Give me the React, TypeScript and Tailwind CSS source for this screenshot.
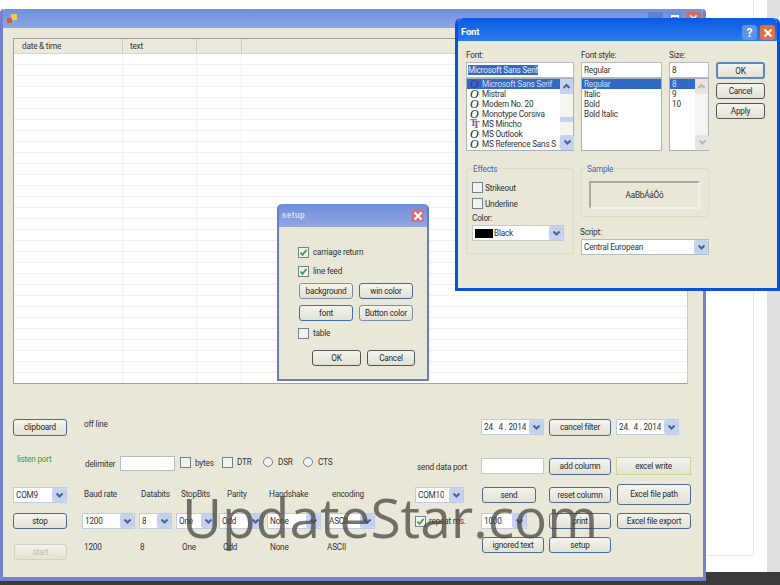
import type { ReactNode } from 'react';

function Btn({
  children,
  className = '',
  tone = 'border-[#4f6a8a]',
}: {
  children: ReactNode;
  className?: string;
  tone?: string;
}) {
  return (
    <div
      className={`flex shrink-0 items-center justify-center rounded-[3px] border bg-gradient-to-b from-[#f4f4ee] to-[#e3e1d3] text-[#2a2a2a] ${tone} ${className}`}
    >
      {children}
    </div>
  );
}

function Arrow({ muted = false }: { muted?: boolean }) {
  return (
    <span
      className={`flex h-full w-[14px] shrink-0 items-center justify-center rounded-[2px] ${
        muted ? 'bg-[#e6e6e0]' : 'bg-[#c4d2f2]'
      }`}
    >
      <svg width="9" height="7" viewBox="0 0 9 7" fill="none">
        <path d="M1.5 1.5 L4.5 4.5 L7.5 1.5" stroke={muted ? '#b8b8b0' : '#4d6185'} strokeWidth="2" />
      </svg>
    </span>
  );
}

function Combo({ value, className = '' }: { value: string; className?: string }) {
  return (
    <div
      className={`flex shrink-0 items-center justify-between border border-[#c2cbdd] bg-white pl-[2px] ${className}`}
    >
      <span className="truncate whitespace-pre">{value}</span>
      <Arrow />
    </div>
  );
}

function Check({ checked = false, className = '' }: { checked?: boolean; className?: string }) {
  return (
    <span
      className={`flex h-[11px] w-[11px] shrink-0 items-center justify-center border border-[#74808c] bg-[#f2f2ec] ${className}`}
    >
      {checked && (
        <svg width="9" height="9" viewBox="0 0 9 9" fill="none">
          <path d="M1.5 4.5 L3.5 6.8 L7.5 2" stroke="#3f9a3f" strokeWidth="1.8" />
        </svg>
      )}
    </span>
  );
}

function Radio({ className = '' }: { className?: string }) {
  return <span className={`block h-[10px] w-[10px] shrink-0 rounded-full border border-[#71808f] bg-[#f2f2ec] ${className}`} />;
}

const tableRows = Array.from({ length: 30 }, (_, i) => i);

function TableArea() {
  return (
    <div className="ml-[10px] mt-[10px] h-[346px] w-[675px] shrink-0 overflow-hidden border border-[#9a9d9c] border-b-[#a3a3a0] border-r-[#c9c9c0] bg-white">
      <div className="flex h-[15px] border-b border-[#d8d6c6] bg-[#ebe9d9] text-[#333]">
        <div className="w-[109px] border-r border-[#cfcdbd] pl-[8px] leading-[14px]">date &amp; time</div>
        <div className="w-[74px] border-r border-[#cfcdbd] pl-[7px] leading-[14px]">text</div>
        <div className="w-[45px] border-r border-[#cfcdbd]" />
      </div>
      {tableRows.map((r) => (
        <div key={r} className="flex h-[11px] border-b border-[#f1f1eb]">
          <div className="w-[109px] border-r border-[#f3f3ee]" />
          <div className="w-[74px] border-r border-[#f3f3ee]" />
          <div className="w-[45px] border-r border-[#f3f3ee]" />
        </div>
      ))}
    </div>
  );
}

function ControlPanel() {
  return (
    <div className="ml-[10px] mt-[35px] flex w-[680px] flex-col leading-[11px] text-[#333]">
      {/* clipboard row */}
      <div className="flex h-[20px] items-start">
        <Btn className="h-[17px] w-[54px]">clipboard</Btn>
        <span className="ml-[17px] mt-[0px]">off line</span>
        <div className="ml-auto mr-[14px] flex items-start">
          <Combo value="24.  4 . 2014" className="h-[16px] w-[63px]" />
          <Btn className="ml-[5px] h-[17px] w-[62px]">cancel filter</Btn>
          <Combo value="24.  4 . 2014" className="ml-[5px] h-[16px] w-[63px]" />
        </div>
      </div>

      {/* listen port / delimiter row */}
      <div className="mt-[15px] flex h-[22px] items-start whitespace-nowrap">
        <span className="ml-[4px] w-[68px] text-[#3f9a3f]">listen port</span>
        <span className="mt-[5px] w-[35px]">delimiter</span>
        <div className="mt-[2px] h-[15px] w-[55px] border border-[#b5bac0] bg-white" />
        <Check className="ml-[5px] mt-[3px]" />
        <span className="ml-[4px] mt-[4px] w-[20px]">bytes</span>
        <Check className="ml-[7px] mt-[3px] border-[#445]" />
        <span className="ml-[4px] mt-[3px] w-[16px]">DTR</span>
        <Radio className="ml-[10px] mt-[3px]" />
        <span className="ml-[5px] mt-[3px] w-[16px]">DSR</span>
        <Radio className="ml-[9px] mt-[3px]" />
        <span className="ml-[5px] mt-[3px] w-[17px]">CTS</span>
        <span className="ml-[82px] mt-[8px] w-[64px]">send data port</span>
        <div className="mt-[4px] h-[16px] w-[63px] border border-[#c6c8cc] bg-white" />
        <Btn className="ml-[5px] mt-[4px] h-[17px] w-[62px]">add column</Btn>
        <Btn className="ml-[5px] mt-[3px] h-[18px] w-[75px] rounded-none" tone="border-[#cfd48f]">
          excel write
        </Btn>
      </div>

      {/* port row */}
      <div className="mt-[8px] flex h-[21px] items-start whitespace-nowrap">
        <Combo value="COM9" className="mt-[3px] h-[16px] w-[54px]" />
        <span className="ml-[17px] mt-[5px] w-[57px]">Baud rate</span>
        <span className="mt-[5px] w-[40px]">Databits</span>
        <span className="mt-[5px] w-[46px]">StopBits</span>
        <span className="mt-[5px] w-[42px]">Parity</span>
        <span className="mt-[5px] w-[63px]">Handshake</span>
        <span className="mt-[5px] w-[50px]">encoding</span>
        <Combo value="COM10" className="ml-[33px] mt-[3px] h-[16px] w-[49px]" />
        <Btn className="ml-[18px] mt-[3px] h-[16px] w-[54px]">send</Btn>
        <Btn className="ml-[13px] mt-[3px] h-[16px] w-[62px]">reset column</Btn>
        <Btn className="ml-[6px] h-[21px] w-[74px]">Excel file path</Btn>
      </div>

      {/* settings row */}
      <div className="mt-[8px] flex h-[16px] items-start whitespace-nowrap">
        <Btn className="h-[16px] w-[54px]">stop</Btn>
        <Combo value="1200" className="ml-[15px] h-[16px] w-[53px]" />
        <Combo value="8" className="ml-[4px] h-[16px] w-[33px]" />
        <Combo value="One" className="ml-[4px] h-[16px] w-[40px]" />
        <Combo value="Odd" className="ml-[3px] h-[16px] w-[44px]" />
        <Combo value="None" className="ml-[4px] h-[16px] w-[54px]" />
        <Combo value="ASCII" className="ml-[5px] h-[16px] w-[49px]" />
        <Check checked className="ml-[40px] mt-[3px]" />
        <span className="ml-[3px] mt-[3px] w-[52px]">repeat ms.</span>
        <Combo value="1000" className="h-[16px] w-[46px]" />
        <Btn className="ml-[22px] h-[16px] w-[62px]">print</Btn>
        <Btn className="ml-[6px] h-[16px] w-[74px]">Excel file export</Btn>
      </div>

      {/* start row */}
      <div className="mt-[8px] flex h-[23px] items-start whitespace-nowrap">
        <Btn className="ml-[1px] mt-[7px] h-[16px] w-[53px] text-[#bdbdb0]" tone="border-[#d2d0c2]">
          start
        </Btn>
        <span className="ml-[17px] mt-[5px] w-[56px]">1200</span>
        <span className="mt-[5px] w-[42px]">8</span>
        <span className="mt-[5px] w-[41px]">One</span>
        <span className="mt-[5px] w-[47px]">Odd</span>
        <span className="mt-[5px] w-[57px]">None</span>
        <span className="mt-[5px] w-[155px]">ASCII</span>
        <Btn className="h-[16px] w-[62px]">ignored text</Btn>
        <Btn className="ml-[5px] h-[16px] w-[62px]" tone="border-[#3f6fae]">
          setup
        </Btn>
      </div>
    </div>
  );
}

function MainWindow() {
  return (
    <div className="absolute left-0 top-[9px] flex h-[572px] w-[706px] flex-col rounded-t-[4px] border-x-[3px] border-b-[4px] border-[#7480cc] bg-[#e9e8d8]">
      <div className="flex h-[19px] shrink-0 items-center rounded-t-[3px] bg-gradient-to-b from-[#6e8fdc] to-[#8ea6e4] pl-[4px]">
        <svg width="10" height="10" viewBox="0 0 10 10">
          <rect x="4" y="0" width="6" height="6" fill="#f2cb4e" />
          <rect x="0" y="4" width="5" height="5" fill="#d2553f" />
          <rect x="5" y="6" width="3" height="3" fill="#8fa8d8" />
        </svg>
        <div className="ml-auto mr-[2px] flex gap-[4px]">
          <span className="h-[14px] w-[15px] rounded-[2px] bg-[#5d7fd8]" />
          <span className="flex h-[14px] w-[15px] items-start justify-center rounded-[2px] bg-[#6d8de0]">
            <span className="mt-[3px] h-[7px] w-[8px] border border-t-2 border-white" />
          </span>
          <span className="flex h-[14px] w-[15px] items-center justify-center rounded-[2px] bg-[#cd6b66]">
            <svg width="9" height="9" viewBox="0 0 10 10" fill="none">
              <path d="M1.5 1.5 L8.5 8.5 M8.5 1.5 L1.5 8.5" stroke="#f3dede" strokeWidth="2" />
            </svg>
          </span>
        </div>
      </div>
      <TableArea />
      <ControlPanel />
    </div>
  );
}

function SetupDialog() {
  return (
    <div className="absolute left-[277px] top-[204px] flex h-[177px] w-[152px] flex-col rounded-t-[5px] border-x-[2px] border-b-[2px] border-[#6a7cc6] bg-[#e9e8d8] leading-[11px] text-[#333]">
      <div className="flex h-[23px] shrink-0 items-center justify-between rounded-t-[4px] bg-gradient-to-b from-[#6f8cd8] to-[#92a7e2] pl-[3px] pr-[3px]">
        <span className="font-bold tracking-[0.5px] text-[#d7def3]">setup</span>
        <span className="flex h-[13px] w-[13px] items-center justify-center rounded-[2px] bg-[#d5717c]">
          <svg width="10" height="10" viewBox="0 0 10 10" fill="none">
            <path d="M1.5 1.5 L8.5 8.5 M8.5 1.5 L1.5 8.5" stroke="#fff" strokeWidth="2" />
          </svg>
        </span>
      </div>
      <div className="flex flex-col pl-[19px]">
        <div className="mt-[20px] flex h-[11px] items-center gap-[4px]">
          <Check checked /> carriage return
        </div>
        <div className="mt-[8px] flex h-[11px] items-center gap-[4px]">
          <Check checked /> line feed
        </div>
        <div className="ml-[1px] mt-[6px] flex gap-[6px]">
          <Btn className="h-[16px] w-[54px]" tone="border-[#7d8ea3]">background</Btn>
          <Btn className="h-[16px] w-[54px]">win color</Btn>
        </div>
        <div className="ml-[1px] mt-[6px] flex gap-[6px]">
          <Btn className="h-[16px] w-[54px]" tone="border-[#3f6fae]">font</Btn>
          <Btn className="h-[16px] w-[54px]" tone="border-[#7d8ea3]">Button color</Btn>
        </div>
        <div className="mt-[7px] flex h-[11px] items-center gap-[4px]">
          <Check /> table
        </div>
        <div className="ml-[14px] mt-[11px] flex gap-[6px]">
          <Btn className="h-[16px] w-[49px]" tone="border-[#555]">OK</Btn>
          <Btn className="h-[16px] w-[48px]" tone="border-[#555]">Cancel</Btn>
        </div>
      </div>
    </div>
  );
}

const fonts: { name: string; kind?: 'tt'; selected?: boolean }[] = [
  { name: 'Microsoft Sans Serif', selected: true },
  { name: 'Mistral' },
  { name: 'Modern No. 20' },
  { name: 'Monotype Corsiva' },
  { name: 'MS Mincho', kind: 'tt' },
  { name: 'MS Outlook' },
  { name: 'MS Reference Sans S' },
];

function ScrollBar({ muted = false, thumb = false }: { muted?: boolean; thumb?: boolean }) {
  return (
    <div className="flex h-full w-[13px] shrink-0 flex-col bg-[#f5f5ef]">
      <span className={`flex h-[15px] shrink-0 items-center justify-center ${muted ? 'bg-[#e6e6e0]' : 'bg-[#c4d2f2]'}`}>
        <svg width="9" height="7" viewBox="0 0 9 7" fill="none">
          <path d="M1.5 5 L4.5 2 L7.5 5" stroke={muted ? '#b8b8b0' : '#4d6185'} strokeWidth="2" />
        </svg>
      </span>
      {thumb && <span className="mt-[23px] h-[5px] shrink-0 bg-[#c4d2f2]" />}
      <span className="mt-auto h-[15px] shrink-0">
        <Arrow muted={muted} />
      </span>
    </div>
  );
}

function Glyph({ kind, selected }: { kind?: 'tt'; selected?: boolean }) {
  if (kind === 'tt') {
    return (
      <span className="relative h-[10px] w-[12px] shrink-0 font-['Liberation_Serif',serif] text-[10px] font-bold leading-[9px]">
        <span className="absolute left-0 top-[-1px] text-[#5f6f8f]">T</span>
        <span className="absolute left-[3px] top-[1px] text-[#a03fa0]">T</span>
      </span>
    );
  }
  return (
    <span
      className={`w-[12px] shrink-0 font-['Liberation_Serif',serif] text-[12px] italic leading-[9px] ${
        selected ? 'text-[#5c1f8c]' : 'text-[#1a1a1a]'
      }`}
    >
      O
    </span>
  );
}

function FontDialog() {
  return (
    <div className="absolute left-[455px] top-[18px] flex h-[273px] w-[325px] flex-col rounded-t-[6px] border-x-[3px] border-b-[3px] border-[#0a50d8] bg-[#e9e8d8] leading-[10px] text-[#333]">
      <div className="flex h-[23px] shrink-0 items-center justify-between rounded-t-[5px] bg-gradient-to-b from-[#0a5ae0] to-[#2a7cf0] pl-[3px] pr-[2px]">
        <span className="mt-[4px] text-[9.5px] font-bold text-white">Font</span>
        <div className="mt-[6px] flex gap-[3px]">
          <span className="flex h-[15px] w-[15px] items-center justify-center rounded-[3px] bg-[#5b92ea] text-[12px] font-bold text-white">?</span>
          <span className="flex h-[15px] w-[15px] items-center justify-center rounded-[3px] bg-[#e0703f]">
            <svg width="10" height="10" viewBox="0 0 10 10" fill="none">
              <path d="M1.5 1.5 L8.5 8.5 M8.5 1.5 L1.5 8.5" stroke="#fff" strokeWidth="2" />
            </svg>
          </span>
        </div>
      </div>
      <div className="flex pl-[8px] pt-[9px]">
        {/* font family */}
        <div className="flex w-[108px] flex-col">
          <span className="h-[11px] leading-[11px]">Font:</span>
          <div className="mt-[1px] flex h-[16px] items-center border border-[#b5bac0] bg-white pl-[1px]">
            <span className="bg-[#316ac5] text-[#e6ecf8]">Microsoft Sans Serif</span>
          </div>
          <div className="flex h-[73px] border border-[#a9b2bc] bg-white">
            <div className="flex min-w-0 flex-1 flex-col">
              {fonts.map((f) => (
                <div
                  key={f.name}
                  className={`flex h-[10px] shrink-0 items-center whitespace-nowrap pl-[3px] ${
                    f.selected ? 'bg-[#316ac5] text-[#d4dcf0]' : ''
                  }`}
                >
                  <Glyph kind={f.kind} selected={f.selected} />
                  <span>{f.name}</span>
                </div>
              ))}
            </div>
            <ScrollBar thumb />
          </div>
        </div>
        {/* style */}
        <div className="ml-[7px] flex w-[81px] flex-col">
          <span className="h-[11px] leading-[11px]">Font style:</span>
          <div className="mt-[1px] flex h-[16px] items-center border border-[#b5bac0] bg-white pl-[2px]">Regular</div>
          <div className="h-[73px] border border-[#a9b2bc] bg-white">
            {['Regular', 'Italic', 'Bold', 'Bold Italic'].map((s, i) => (
              <div key={s} className={`h-[10px] pl-[2px] ${i === 0 ? 'bg-[#316ac5] text-[#d4dcf0]' : ''}`}>
                {s}
              </div>
            ))}
          </div>
        </div>
        {/* size */}
        <div className="ml-[7px] flex w-[40px] flex-col">
          <span className="h-[11px] leading-[11px]">Size:</span>
          <div className="mt-[1px] flex h-[16px] items-center border border-[#b5bac0] bg-white pl-[2px]">8</div>
          <div className="flex h-[73px] border border-[#a9b2bc] bg-white">
            <div className="flex-1">
              {['8', '9', '10'].map((s, i) => (
                <div key={s} className={`h-[10px] pl-[2px] ${i === 0 ? 'bg-[#316ac5] text-[#d4dcf0]' : ''}`}>
                  {s}
                </div>
              ))}
            </div>
            <ScrollBar muted />
          </div>
        </div>
        {/* actions */}
        <div className="ml-[7px] mt-[12px] flex flex-col gap-[4px]">
          <Btn className="h-[17px] w-[49px] border-2" tone="border-[#5f86bd]">OK</Btn>
          <Btn className="h-[16px] w-[49px]" tone="border-[#555]">Cancel</Btn>
          <Btn className="h-[16px] w-[49px]" tone="border-[#555]">Apply</Btn>
        </div>
      </div>
      <div className="flex pl-[8px] pt-[17px]">
        <div className="relative h-[86px] w-[108px] rounded-[3px] border border-[#dcdacb] pl-[5px] pt-[13px]">
          <span className="absolute left-[5px] top-[-5px] bg-[#e9e8d8] px-[1px] text-[#4a62b0]">Effects</span>
          <div className="flex h-[11px] items-center"><Check /><span className="ml-[2px]">Strikeout</span></div>
          <div className="mt-[5px] flex h-[11px] items-center"><Check /><span className="ml-[2px]">Underline</span></div>
          <div className="mt-[4px] h-[11px] leading-[11px]">Color:</div>
          <div className="mt-[1px] flex h-[16px] w-[92px] items-center justify-between border border-[#c6c8cc] bg-white pl-[2px]">
            <span className="flex items-center gap-[1px]"><span className="h-[9px] w-[18px] bg-black" />Black</span>
            <Arrow />
          </div>
        </div>
        <div className="ml-[6px] flex flex-col">
          <div className="relative h-[49px] w-[129px] rounded-[3px] border border-[#dcdacb] pl-[8px] pt-[12px]">
            <span className="absolute left-[5px] top-[-5px] bg-[#e9e8d8] px-[1px] text-[#4a62b0]">Sample</span>
            <div className="flex h-[28px] w-[111px] items-center justify-center border-2 border-[#a8a898] border-b-[#f3f3ec] border-r-[#f3f3ec]">AaBbÁáÔô</div>
          </div>
          <span className="mt-[10px] h-[11px] leading-[11px]">Script:</span>
          <div className="ml-[1px] mt-[1px] flex h-[16px] w-[128px] items-center justify-between border border-[#b5bac0] bg-white pl-[2px]">
            Central European
            <Arrow />
          </div>
        </div>
      </div>
    </div>
  );
}

export default function App() {
  return (
    <div className="relative h-[585px] w-[780px] overflow-hidden bg-white font-['Roboto',sans-serif] text-[8.2px] tracking-[-0.2px]">
      {/* what is behind the app window */}
      <div className="absolute right-0 top-0 h-[585px] w-[13px] bg-[#e0e0e0]" />
      <div className="absolute left-[705px] top-0 h-[556px] w-[49px] border-b border-r border-[#e8e8e8]" />
      <div className="absolute left-0 top-[572px] h-[13px] w-[780px] bg-[#3d3a3c]" />

      <MainWindow />
      <SetupDialog />
      <FontDialog />

      {/* watermark */}
      <div className="absolute left-[182px] top-[479px] whitespace-nowrap font-['Open_Sans',sans-serif] text-[55px] leading-[76px] tracking-normal text-[#4a4640]/75">
        UpdateStar.com
      </div>
    </div>
  );
}
